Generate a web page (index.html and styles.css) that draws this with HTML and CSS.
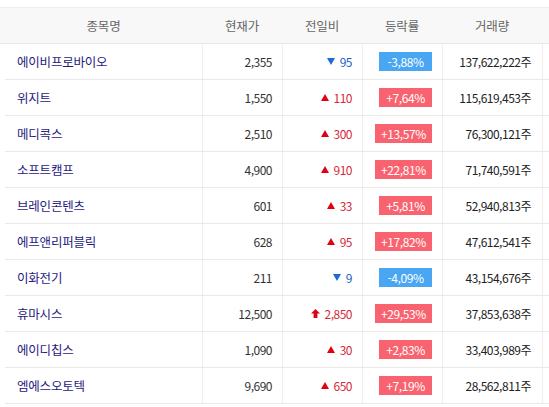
FILE: index.html
```html
<!DOCTYPE html>
<html lang="ko">
<head>
<meta charset="utf-8">
<link rel="stylesheet" href="styles.css">
</head>
<body>
<div class="board">
  <div class="head">
    <div class="hc c1">종목명</div>
    <div class="hc">현재가</div>
    <div class="hc">전일비</div>
    <div class="hc">등락률</div>
    <div class="hc c5">거래량</div>
    <div class="hc"></div>
  </div>
  <div class="rows">
    <div class="row"><div class="name">에이비프로바이오</div><div class="num">2,355</div><div class="chg dn"><svg class="tri" viewBox="0 0 8 7"><path d="M0 0H8L4 7Z"/></svg>95</div><div class="rate"><span class="badge b-dn">-3,88%</span></div><div class="vol">137,622,222주</div><div class="ext"></div></div>
    <div class="row"><div class="name">위지트</div><div class="num">1,550</div><div class="chg up"><svg class="tri" viewBox="0 0 8 7"><path d="M4 0L8 7H0Z"/></svg>110</div><div class="rate"><span class="badge b-up">+7,64%</span></div><div class="vol">115,619,453주</div><div class="ext"></div></div>
    <div class="row"><div class="name">메디콕스</div><div class="num">2,510</div><div class="chg up"><svg class="tri" viewBox="0 0 8 7"><path d="M4 0L8 7H0Z"/></svg>300</div><div class="rate"><span class="badge b-up">+13,57%</span></div><div class="vol">76,300,121주</div><div class="ext"></div></div>
    <div class="row"><div class="name">소프트캠프</div><div class="num">4,900</div><div class="chg up"><svg class="tri" viewBox="0 0 8 7"><path d="M4 0L8 7H0Z"/></svg>910</div><div class="rate"><span class="badge b-up">+22,81%</span></div><div class="vol">71,740,591주</div><div class="ext"></div></div>
    <div class="row"><div class="name">브레인콘텐츠</div><div class="num">601</div><div class="chg up"><svg class="tri" viewBox="0 0 8 7"><path d="M4 0L8 7H0Z"/></svg>33</div><div class="rate"><span class="badge b-up">+5,81%</span></div><div class="vol">52,940,813주</div><div class="ext"></div></div>
    <div class="row"><div class="name">에프앤리퍼블릭</div><div class="num">628</div><div class="chg up"><svg class="tri" viewBox="0 0 8 7"><path d="M4 0L8 7H0Z"/></svg>95</div><div class="rate"><span class="badge b-up">+17,82%</span></div><div class="vol">47,612,541주</div><div class="ext"></div></div>
    <div class="row"><div class="name">이화전기</div><div class="num">211</div><div class="chg dn"><svg class="tri" viewBox="0 0 8 7"><path d="M0 0H8L4 7Z"/></svg>9</div><div class="rate"><span class="badge b-dn">-4,09%</span></div><div class="vol">43,154,676주</div><div class="ext"></div></div>
    <div class="row"><div class="name">휴마시스</div><div class="num">12,500</div><div class="chg up"><svg class="arr" viewBox="0 0 9 9"><path d="M4.5 0L9 4.6H6.4V9H2.6V4.6H0Z"/></svg>2,850</div><div class="rate"><span class="badge b-up">+29,53%</span></div><div class="vol">37,853,638주</div><div class="ext"></div></div>
    <div class="row"><div class="name">에이디칩스</div><div class="num">1,090</div><div class="chg up"><svg class="tri" viewBox="0 0 8 7"><path d="M4 0L8 7H0Z"/></svg>30</div><div class="rate"><span class="badge b-up">+2,83%</span></div><div class="vol">33,403,989주</div><div class="ext"></div></div>
    <div class="row"><div class="name">엠에스오토텍</div><div class="num">9,690</div><div class="chg up"><svg class="tri" viewBox="0 0 8 7"><path d="M4 0L8 7H0Z"/></svg>650</div><div class="rate"><span class="badge b-up">+7,19%</span></div><div class="vol">28,562,811주</div><div class="ext"></div></div>
  </div>
</div>
</body>
</html>
```

FILE: styles.css
```css
html, body {
  margin: 0;
  padding: 0;
  background: #fff;
  overflow: hidden;
}
body {
  font-family: "Noto Sans CJK KR", "Noto Sans", sans-serif;
  font-size: 12px;
  color: #333;
}
.board {
  padding-top: 7px;
  width: 549px;
  overflow: hidden;
}
.head {
  display: grid;
  grid-template-columns: 202px 80px 80px 80px 100px minmax(0, 1fr);
  height: 35px;
  background: #f8f8f8;
  border-top: 1px solid #eeeeee;
  border-bottom: 1px solid #e6e6e6;
}
.hc {
  display: flex;
  align-items: center;
  justify-content: center;
  color: #666;
  font-size: 12.5px;
  letter-spacing: -0.2px;
}
.hc.c1 {
  padding-left: 5px;
}
.rows {
  margin-left: 5px;
}
.row {
  display: grid;
  grid-template-columns: 197px 80px 80px 80px 100px minmax(0, 1fr);
  height: 35px;
  border-bottom: 1px solid #e9e9e9;
}
.row > div {
  display: flex;
  align-items: center;
  white-space: nowrap;
}
.row > div + div {
  border-left: 1px solid #eeeeee;
}
.name {
  padding-left: 12px;
  color: #1f1a80;
  font-size: 12.5px;
  letter-spacing: -0.2px;
}
.num, .chg, .vol {
  justify-content: flex-end;
  letter-spacing: -0.5px;
}
.num {
  padding-right: 10px;
  color: #333;
}
.chg {
  padding-right: 10px;
}
.chg.up { color: #d42a3a; }
.chg.dn { color: #1a62c8; }
.tri {
  width: 8px;
  height: 7px;
  margin-right: 5px;
}
.up .tri, .up .arr { fill: #e00012; }
.dn .tri { fill: #1a6ad8; }
.arr {
  width: 9px;
  height: 9px;
  margin-right: 5px;
}
.rate {
  justify-content: flex-end;
  padding-right: 10px;
}
.badge {
  display: inline-block;
  height: 19px;
  line-height: 19px;
  padding: 0 6px;
  min-width: 41px;
  text-align: center;
  color: #fff;
  letter-spacing: -0.4px;
}
.b-up { background: #f8636f; }
.b-dn { background: #48a6f2; }
.vol {
  padding-right: 11px;
  color: #222;
}
```
